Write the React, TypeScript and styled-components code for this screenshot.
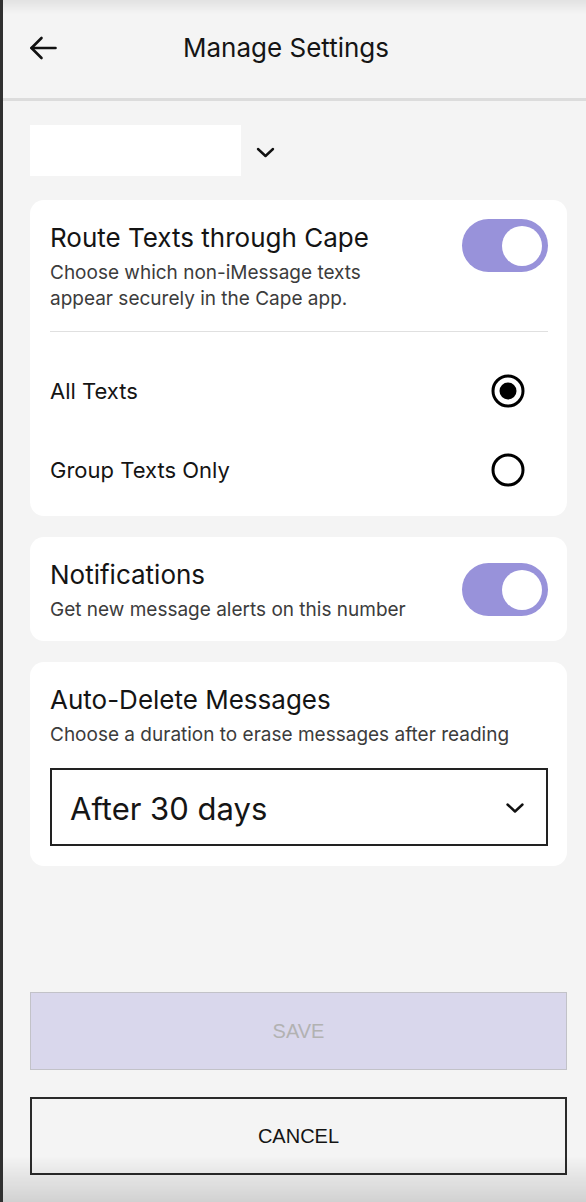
import React, { useState } from "react";
import styled, { createGlobalStyle } from "styled-components";

const GlobalStyle = createGlobalStyle`
  *, *::before, *::after { box-sizing: border-box; }
  html, body { margin: 0; padding: 0; background: #f4f4f4; }
  body { font-family: Inter, "Noto Sans", sans-serif; color: #111; }
`;

const Page = styled.div`
  position: relative;
  min-height: 100vh;
  border-left: 3px solid #303030;
  background: #f4f4f4;
  display: flex;
  flex-direction: column;
`;

const TopShade = styled.div`
  position: fixed;
  top: 0;
  left: 3px;
  right: 0;
  height: 14px;
  pointer-events: none;
  background: linear-gradient(rgba(0, 0, 0, 0.07), rgba(0, 0, 0, 0));
`;

const BottomShade = styled.div`
  position: fixed;
  bottom: 0;
  left: 3px;
  right: 0;
  height: 46px;
  pointer-events: none;
  background: linear-gradient(rgba(0, 0, 0, 0), rgba(0, 0, 0, 0.14));
`;

const Header = styled.header`
  height: 101px;
  display: flex;
  align-items: center;
  padding-left: 26px;
  padding-bottom: 3px;
  gap: 126px;
  border-bottom: 3px solid #dcdcdc;
`;

const IconButton = styled.button`
  border: 0;
  background: none;
  padding: 0;
  display: flex;
  cursor: pointer;
  color: #111;
`;

const Title = styled.h1`
  margin: 0;
  font-size: 26px;
  font-weight: 400;
  line-height: 26px;
  color: #151515;
`;

const Content = styled.main`
  display: flex;
  flex-direction: column;
  gap: 21px;
  padding: 24px 19px 0 27px;
`;

const NumberRow = styled.div`
  display: flex;
  align-items: center;
  gap: 15px;
  margin-bottom: 3px;
`;

const NumberField = styled.div`
  width: 211px;
  height: 51px;
  background: #fff;
`;

const Chevron = styled.svg<{ $down?: number }>`
  display: block;
  margin-top: ${(p) => p.$down ?? 0}px;
`;

const Card = styled.section<{ $pb: number }>`
  background: #fff;
  border-radius: 14px;
  padding: 22px 19px ${(p) => p.$pb}px 20px;
  display: flex;
  flex-direction: column;
`;

const HeadRow = styled.div`
  display: flex;
  align-items: flex-start;
  justify-content: space-between;
  gap: 16px;
`;

const TextCol = styled.div`
  display: flex;
  flex-direction: column;
`;

const CardTitle = styled.h2`
  margin: 0;
  font-size: 26px;
  font-weight: 400;
  line-height: 32px;
  color: #141414;
`;

const CardText = styled.p`
  margin: 6px 0 0;
  font-size: 19px;
  line-height: 26px;
  color: #3c3c3c;
`;

const Switch = styled.button<{ $on: boolean; $offset: number }>`
  flex: none;
  width: 86px;
  height: 53px;
  border-radius: 27px;
  border: 0;
  padding: 0 6px;
  margin-top: ${(p) => p.$offset}px;
  background: ${(p) => (p.$on ? "#9892da" : "#cfcfcf")};
  display: flex;
  align-items: center;
  justify-content: ${(p) => (p.$on ? "flex-end" : "flex-start")};
  cursor: pointer;
`;

const Knob = styled.span`
  width: 40px;
  height: 40px;
  border-radius: 50%;
  background: #fff;
`;

const Divider = styled.hr`
  margin: 19px 0 0;
  border: 0;
  height: 1px;
  background: #e0e0e0;
`;

const Options = styled.div`
  display: flex;
  flex-direction: column;
  padding: 19px 23px 0 0;
`;

const OptionRow = styled.label`
  height: 79px;
  display: flex;
  align-items: center;
  justify-content: space-between;
  font-size: 22px;
  line-height: 22px;
  color: #141414;
  cursor: pointer;
`;

const SelectBox = styled.div`
  margin-top: 20px;
  height: 78px;
  border: 2px solid #222;
  display: flex;
  align-items: center;
  justify-content: space-between;
  padding: 2px 22px 0 18px;
  font-size: 31px;
  line-height: 31px;
  color: #151515;
`;

const Footer = styled.footer`
  margin-top: auto;
  padding: 0 19px 27px 27px;
  display: flex;
  flex-direction: column;
  gap: 27px;
`;

const ActionButton = styled.button<{ $primary?: boolean }>`
  height: 78px;
  width: 100%;
  font-family: "Liberation Sans", Arial, sans-serif;
  font-size: 20px;
  letter-spacing: 0;
  cursor: pointer;
  background: ${(p) => (p.$primary ? "#d9d7ec" : "transparent")};
  color: ${(p) => (p.$primary ? "#b2b2b2" : "#141414")};
  border: ${(p) => (p.$primary ? "1px solid #c2c2c8" : "2px solid #2a2a2a")};
`;

function Radio({ checked }: { checked: boolean }) {
  return (
    <svg width="34" height="34" viewBox="0 0 34 34">
      <circle cx="17" cy="17" r="15" fill="none" stroke="#000" strokeWidth="3" />
      {checked && <circle cx="17" cy="17" r="8.5" fill="#000" />}
    </svg>
  );
}

function Toggle({ on, onClick, offset }: { on: boolean; onClick: () => void; offset: number }) {
  return (
    <Switch type="button" $on={on} $offset={offset} onClick={onClick} aria-pressed={on}>
      <Knob />
    </Switch>
  );
}

export default function App() {
  const [route, setRoute] = useState(true);
  const [notify, setNotify] = useState(true);
  const [mode, setMode] = useState<"all" | "group">("all");

  return (
    <>
      <GlobalStyle />
      <Page>
        <Header>
          <IconButton type="button" aria-label="Back">
            <svg width="28" height="24" viewBox="0 0 28 24" fill="none" stroke="#111" strokeWidth="2.6" strokeLinecap="round" strokeLinejoin="round">
              <path d="M26.5 12H2.5" />
              <path d="M12.5 2L2.5 12L12.5 22" />
            </svg>
          </IconButton>
          <Title>Manage Settings</Title>
        </Header>

        <Content>
          <NumberRow>
            <NumberField />
            <Chevron $down={4} width="19" height="11" viewBox="0 0 19 11" fill="none" stroke="#111" strokeWidth="2.4" strokeLinecap="round" strokeLinejoin="round">
              <path d="M2 2L9.5 9L17 2" />
            </Chevron>
          </NumberRow>

          <Card $pb={7}>
            <HeadRow>
              <TextCol>
                <CardTitle>Route Texts through Cape</CardTitle>
                <CardText>
                  Choose which non-iMessage texts
                  <br />
                  appear securely in the Cape app.
                </CardText>
              </TextCol>
              <Toggle on={route} onClick={() => setRoute(!route)} offset={-3} />
            </HeadRow>
            <Divider />
            <Options>
              <OptionRow onClick={() => setMode("all")}>
                All Texts
                <Radio checked={mode === "all"} />
              </OptionRow>
              <OptionRow onClick={() => setMode("group")}>
                Group Texts Only
                <Radio checked={mode === "group"} />
              </OptionRow>
            </Options>
          </Card>

          <Card $pb={18}>
            <HeadRow>
              <TextCol>
                <CardTitle>Notifications</CardTitle>
                <CardText>Get new message alerts on this number</CardText>
              </TextCol>
              <Toggle on={notify} onClick={() => setNotify(!notify)} offset={4} />
            </HeadRow>
          </Card>

          <Card $pb={20}>
            <CardTitle>Auto-Delete Messages</CardTitle>
            <CardText>Choose a duration to erase messages after reading</CardText>
            <SelectBox>
              After 30 days
              <Chevron width="18" height="10" viewBox="0 0 18 10" fill="none" stroke="#111" strokeWidth="2.4" strokeLinecap="round" strokeLinejoin="round">
                <path d="M1.5 1.5L9 8.5L16.5 1.5" />
              </Chevron>
            </SelectBox>
          </Card>
        </Content>

        <Footer>
          <ActionButton type="button" $primary disabled>
            SAVE
          </ActionButton>
          <ActionButton type="button">CANCEL</ActionButton>
        </Footer>
        <TopShade />
        <BottomShade />
      </Page>
    </>
  );
}
